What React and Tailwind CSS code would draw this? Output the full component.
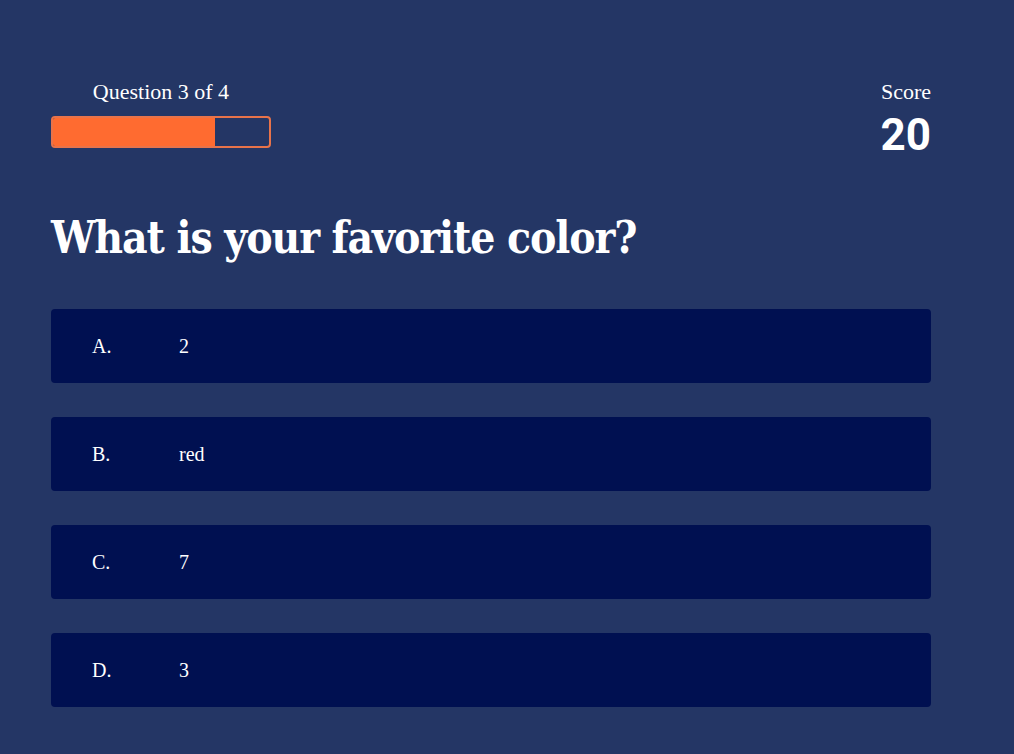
const answers = [
  { letter: "A.", text: "2" },
  { letter: "B.", text: "red" },
  { letter: "C.", text: "7" },
  { letter: "D.", text: "3" },
]

export default function App() {
  return (
    <div className="min-h-screen bg-[#243665] text-white" style={{ fontFamily: '"Liberation Serif", serif' }}>
      <div className="w-[880px] ml-[51px] pt-[78px] pb-[47px]">
        <div className="flex justify-between items-start">
          <div className="w-[220px]">
            <p className="text-[22px] leading-[28px] text-center">Question 3 of 4</p>
            <div className="mt-[10px] h-[32px] rounded-[4px] border-2 border-[#e8734a] overflow-hidden">
              <div className="h-full w-[75%] bg-[#ff6b30]"></div>
            </div>
          </div>
          <div className="text-right">
            <p className="text-[22px] leading-[28px]">Score</p>
            <p className="mt-[5px] text-[44px] leading-[48px] font-bold font-['Roboto',sans-serif]">20</p>
          </div>
        </div>

        <h1 className="mt-[49px] text-[44px] leading-[60px] font-bold font-['DejaVu_Serif_Condensed','DejaVu_Serif',serif] tracking-[-1.1px]">
          What is your favorite color?
        </h1>

        <div className="mt-[41px] flex flex-col gap-[34px]">
          {answers.map((a) => (
            <div key={a.letter} className="h-[74px] rounded-[4px] bg-[#001051] flex items-center px-[41px] text-[20px]">
              <span className="w-[87px]">{a.letter}</span>
              <span>{a.text}</span>
            </div>
          ))}
        </div>
      </div>
    </div>
  );
}
